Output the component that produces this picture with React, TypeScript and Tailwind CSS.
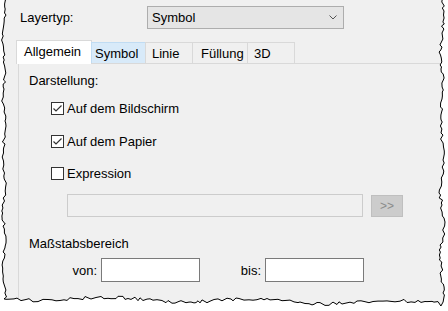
import React from 'react'

function rng(seed: number) {
  let a = seed
  return () => {
    a |= 0
    a = (a + 0x6d2b79f5) | 0
    let t = Math.imul(a ^ (a >>> 15), 1 | a)
    t = (t + Math.imul(t ^ (t >>> 7), 61 | t)) ^ t
    return ((t ^ (t >>> 14)) >>> 0) / 4294967296
  }
}

function tornEdge() {
  const r = rng(7)
  const pts: [number, number][] = []
  // left edge, top to bottom
  for (let y = -2; y < 300; y += 2 + Math.floor(r() * 3)) {
    pts.push([4 + Math.sin(y / 9) * 1.2 + (r() - 0.5) * 3, y])
  }
  // bottom edge, left to right
  for (let x = 4; x < 441; x += 2 + Math.floor(r() * 4)) {
    const base = 298 + (x / 440) * 5
    pts.push([x, base + Math.sin(x / 23) * 2 + (r() - 0.5) * 3.5])
  }
  // right edge, bottom to top
  for (let y = 306; y > -2; y -= 2 + Math.floor(r() * 3)) {
    pts.push([442 + Math.sin(y / 11) * 1.5 + (r() - 0.5) * 3.5, y])
  }
  pts.push([442, -2])
  return pts.map(([x, y], i) => `${i ? 'L' : 'M'}${x.toFixed(1)} ${y.toFixed(1)}`).join(' ') + ' Z'
}

function CheckBox({ checked, label, top }: { checked: boolean; label: string; top: string }) {
  return (
    <div className={`flex items-center h-[15px] pl-[22px] ${top}`}>
      <span className="w-[13px] h-[13px] border border-[#333] bg-white flex items-center justify-center">
        {checked && (
          <svg width="11" height="11" viewBox="0 0 11 11">
            <path d="M1.5 5.5 L4 8 L9.5 2.5" fill="none" stroke="#333" strokeWidth="1.2" />
          </svg>
        )}
      </span>
      <span className="ml-[3px]">{label}</span>
    </div>
  )
}

export default function App() {
  const edge = tornEdge()
  return (
    <div
      className="relative w-[448px] h-[311px] overflow-hidden bg-white text-[13px] leading-[15px] text-black"
      style={{ fontFamily: '"Liberation Sans", Arial, sans-serif' }}
    >
      <div className="h-full bg-[#f0f0f0] pl-[20px] pt-[6px]">
        <div className="flex items-center h-[23px]">
          <span className="w-[127px]">Layertyp:</span>
          <div className="w-[197px] h-[23px] border border-[#adadad] bg-[#e5e5e5] flex items-center justify-between pl-[4px] pr-[6px]">
            <span>Symbol</span>
            <svg width="8" height="5" viewBox="0 0 8 5">
              <path d="M0.5 0.5 L4 4 L7.5 0.5" fill="none" stroke="#555" strokeWidth="1" />
            </svg>
          </div>
        </div>

        <div className="relative z-10 mt-[11px] ml-[-4px] flex items-end h-[23px]">
          <div className="w-[76px] h-[24px] mb-[-1px] bg-white border border-b-0 border-[#d9d9d9] pl-[7px] pt-[3px]">Allgemein</div>
          <div className="w-[55px] h-[21px] ml-[-1px] bg-[#d8eaf9] border border-b-0 border-[#c0dcf3] pl-[3px] pt-[3px]">Symbol</div>
          <div className="w-[48px] h-[21px] ml-[-1px] border border-b-0 border-[#d9d9d9] pl-[6px] pt-[3px]">Linie</div>
          <div className="w-[56px] h-[21px] ml-[-1px] border border-b-0 border-[#d9d9d9] pl-[8px] pt-[3px]">Füllung</div>
          <div className="w-[48px] h-[21px] ml-[-1px] border border-b-0 border-[#d9d9d9] pl-[6px] pt-[3px]">3D</div>
        </div>

        <div className="ml-[-2px] w-[460px] h-[300px] border-l border-t border-[#d9d9d9] pl-[10px]">
          <div className="pt-[9px]">Darstellung:</div>
          <CheckBox checked label="Auf dem Bildschirm" top="mt-[13px]" />
          <CheckBox checked label="Auf dem Papier" top="mt-[18px]" />
          <CheckBox checked={false} label="Expression" top="mt-[17px]" />
          <div className="flex items-start mt-[13px] pl-[38px]">
            <div className="w-[296px] h-[23px] border border-[#cccccc] bg-[#f0f0f0]" />
            <div className="ml-[8px] mt-[1px] w-[32px] h-[22px] border border-[#bfbfbf] bg-[#cccccc] text-[#8a8a8a] flex items-center justify-center text-[12px]">
              &gt;&gt;
            </div>
          </div>
          <div className="mt-[19px]">Maßstabsbereich</div>
          <div className="flex items-center mt-[7px] h-[24px]">
            <span className="w-[72px] text-right pr-[4px]">von:</span>
            <div className="w-[99px] h-[24px] border border-[#7a7a7a] bg-white" />
            <span className="w-[65px] text-right pr-[4px]">bis:</span>
            <div className="w-[99px] h-[24px] border border-[#7a7a7a] bg-white" />
          </div>
        </div>
      </div>

      <svg className="absolute inset-0 pointer-events-none" width="448" height="311" viewBox="0 0 448 311">
        <path d={`M-5 -5 H453 V316 H-5 Z ${edge}`} fill="#ffffff" fillRule="evenodd" />
        <path d={edge} fill="none" stroke="#000" strokeWidth="1" />
      </svg>
    </div>
  )
}
